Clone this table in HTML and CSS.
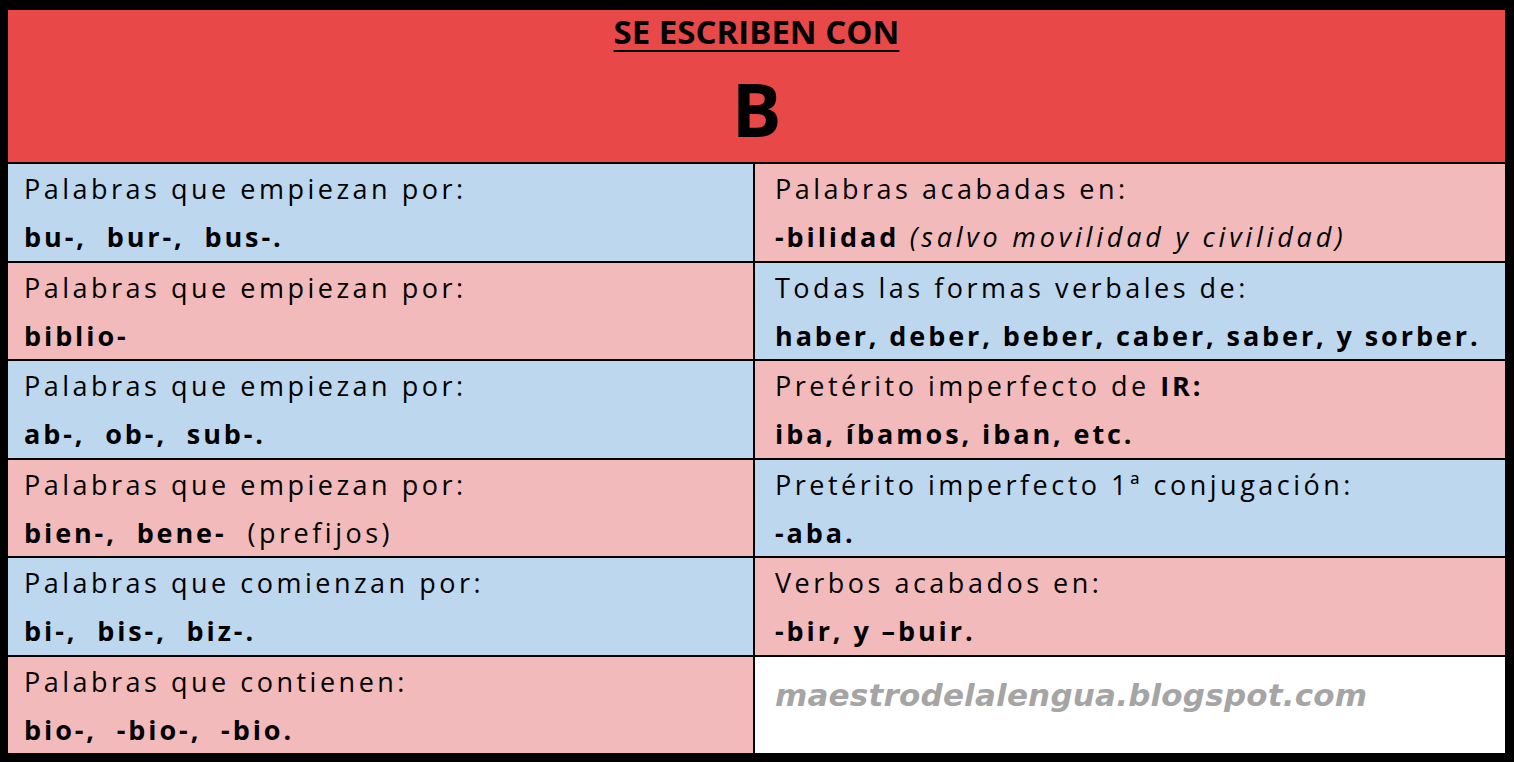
FILE: index.html
```html
<!DOCTYPE html>
<html lang="es">
<head>
<meta charset="utf-8">
<title>Se escriben con B</title>
<link rel="stylesheet" href="styles.css">
</head>
<body>
<div class="table">
  <div class="head">
    <div class="head-title">SE ESCRIBEN CON</div>
    <div class="head-letter">B</div>
  </div>
  <div class="grid">
    <div class="cell blue left"><div>Palabras que empiezan por:</div><div><b>bu-,&nbsp; bur-,&nbsp; bus-.</b></div></div>
    <div class="cell pink right"><div>Palabras acabadas en:</div><div><b>-bilidad</b> <i>(salvo movilidad y civilidad)</i></div></div>
    <div class="cell pink left"><div>Palabras que empiezan por:</div><div><b>biblio-</b></div></div>
    <div class="cell blue right"><div>Todas las formas verbales de:</div><div><b>haber, deber, beber, caber, saber, y sorber.</b></div></div>
    <div class="cell blue left"><div>Palabras que empiezan por:</div><div><b>ab-,&nbsp; ob-,&nbsp; sub-.</b></div></div>
    <div class="cell pink right"><div>Pretérito imperfecto de <b>IR:</b></div><div><b>iba, íbamos, iban, etc.</b></div></div>
    <div class="cell pink left"><div>Palabras que empiezan por:</div><div><b>bien-,&nbsp; bene-</b>&nbsp; (prefijos)</div></div>
    <div class="cell blue right"><div>Pretérito imperfecto 1ª conjugación:</div><div><b>-aba.</b></div></div>
    <div class="cell blue left"><div>Palabras que comienzan por:</div><div><b>bi-,&nbsp; bis-,&nbsp; biz-.</b></div></div>
    <div class="cell pink right"><div>Verbos acabados en:</div><div><b>-bir, y –buir.</b></div></div>
    <div class="cell pink left"><div>Palabras que contienen:</div><div><b>bio-,&nbsp; -bio-,&nbsp; -bio.</b></div></div>
    <div class="cell white right"><div class="mark">maestrodelalengua.blogspot.com</div></div>
  </div>
</div>
</body>
</html>
```
FILE: styles.css
```css
html, body {
  margin: 0;
  padding: 0;
  background: #000;
}
body {
  width: 1514px;
  height: 762px;
  box-sizing: border-box;
  padding: 10px 9px 9px 8px;
  font-family: "Open Sans", "Lato", sans-serif;
  color: #000;
  overflow: hidden;
}
.table {
  display: flex;
  flex-direction: column;
  gap: 2px;
  height: 743px;
}
.head {
  flex: 0 0 152px;
  background: #e84848;
  display: flex;
  flex-direction: column;
  align-items: center;
}
.head-title {
  font-weight: 700;
  font-size: 33px;
  text-decoration: underline;
  text-decoration-thickness: 2px;
  text-underline-offset: 6px;
  line-height: 44px;
}
.head-letter {
  font-weight: 700;
  font-size: 74px;
  line-height: 84px;
  margin-top: 13px;
}
.grid {
  flex: 1;
  min-height: 0;
  display: grid;
  grid-template-columns: 745px 750px;
  grid-template-rows: repeat(6, minmax(0, 1fr));
  gap: 2px;
}
.cell {
  font-size: 27px;
  letter-spacing: 3.5px;
  line-height: 48px;
  padding-top: 1px;
  white-space: nowrap;
  overflow: hidden;
}
.cell b { font-weight: 700; letter-spacing: 2.9px; }
.cell i { letter-spacing: 3.8px; }
.left { padding-left: 16px; }
.right { padding-left: 20px; }
.blue { background: #bdd7ee; }
.pink { background: #f2babb; }
.white { background: #fff; }
.mark {
  font-family: "DejaVu Sans", sans-serif;
  font-weight: 700;
  font-style: italic;
  color: #a5a5a5;
  font-size: 31px;
  letter-spacing: 0.2px;
  line-height: 40px;
  margin-top: 17px;
}
```
